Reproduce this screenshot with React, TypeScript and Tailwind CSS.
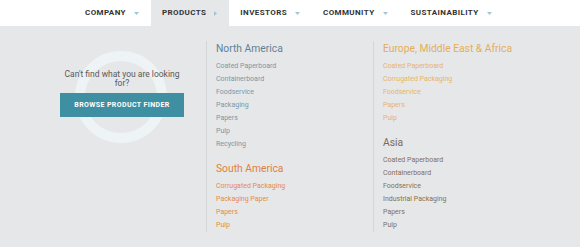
import React from "react";

const Caret = ({ right }: { right?: boolean }) =>
  right ? (
    <svg width="3" height="5" viewBox="0 0 3 5" className="ml-[8px]">
      <path d="M0 0 L3 2.5 L0 5 Z" fill="#9cc9d6" />
    </svg>
  ) : (
    <svg width="5" height="3" viewBox="0 0 5 3" className="ml-[8px]">
      <path d="M0 0 L5 0 L2.5 3 Z" fill="#9cc9d6" />
    </svg>
  );

const navItems = [
  { label: "COMPANY", active: false },
  { label: "PRODUCTS", active: true },
  { label: "INVESTORS", active: false },
  { label: "COMMUNITY", active: false },
  { label: "SUSTAINABILITY", active: false },
];

const Group = ({
  title,
  items,
  head,
  link,
  className = "",
}: {
  title: string;
  items: string[];
  head: string;
  link: string;
  className?: string;
}) => (
  <div className={className}>
    <div className={`text-[10.3px] leading-[16px] mb-[3px] ${head}`}>{title}</div>
    <ul className="flex flex-col">
      {items.map((i) => (
        <li key={i} className={`text-[7px] leading-[13px] ${link}`}>
          {i}
        </li>
      ))}
    </ul>
  </div>
);

export default function App() {
  return (
    <div className="w-[580px] h-[247px] bg-[#e6e7e9] font-['Roboto',sans-serif] overflow-hidden">
      <nav className="h-[26px] bg-white flex items-stretch pl-[74px]">
        {navItems.map((n) => (
          <div
            key={n.label}
            className={`flex items-center pl-[11px] pr-[12px] ${n.active ? "bg-[#e6e7e9]" : ""}`}
          >
            <span className="text-[8px] font-bold tracking-[0.4px] text-[#333]">{n.label}</span>
            <Caret right={n.active} />
          </div>
        ))}
      </nav>
      <div className="flex pt-[15px]">
        <div className="w-[206px] relative">
          <div className="absolute left-[75px] top-[10px] w-[92px] h-[92px] rounded-full border-[10px] border-[#eef3f5]" />
          <div className="relative flex flex-col items-center ml-[60px] w-[124px] mt-[29px]">
            <p className="text-[8.5px] leading-[9px] text-[#5a5a5a] text-center w-[124px]">
              Can't find what you are looking for?
            </p>
            <button className="mt-[5px] w-[124px] h-[24px] bg-[#3f8fa2] text-white text-[7px] font-bold tracking-[0.4px]">
              BROWSE PRODUCT FINDER
            </button>
          </div>
        </div>
        <div className="w-[167px] h-[191px] border-l border-[#d3d5d7] pl-[9px]">
          <Group
            title="North America"
            head="text-[#5f8396]"
            link="text-[#7a98a8]"
            items={["Coated Paperboard", "Containerboard", "Foodservice", "Packaging", "Papers", "Pulp", "Recycling"]}
          />
          <Group
            className="mt-[10px]"
            title="South America"
            head="text-[#e27f3e]"
            link="text-[#e58a4d]"
            items={["Corrugated Packaging", "Packaging Paper", "Papers", "Pulp"]}
          />
        </div>
        <div className="h-[191px] border-l border-[#d3d5d7] pl-[9px]">
          <Group
            title="Europe, Middle East & Africa"
            head="text-[#e3ae5a]"
            link="text-[#e6b565]"
            items={["Coated Paperboard", "Corrugated Packaging", "Foodservice", "Papers", "Pulp"]}
          />
          <Group
            className="mt-[10px]"
            title="Asia"
            head="text-[#7a6a56]"
            link="text-[#87704f]"
            items={["Coated Paperboard", "Containerboard", "Foodservice", "Industrial Packaging", "Papers", "Pulp"]}
          />
        </div>
      </div>
    </div>
  );
}
